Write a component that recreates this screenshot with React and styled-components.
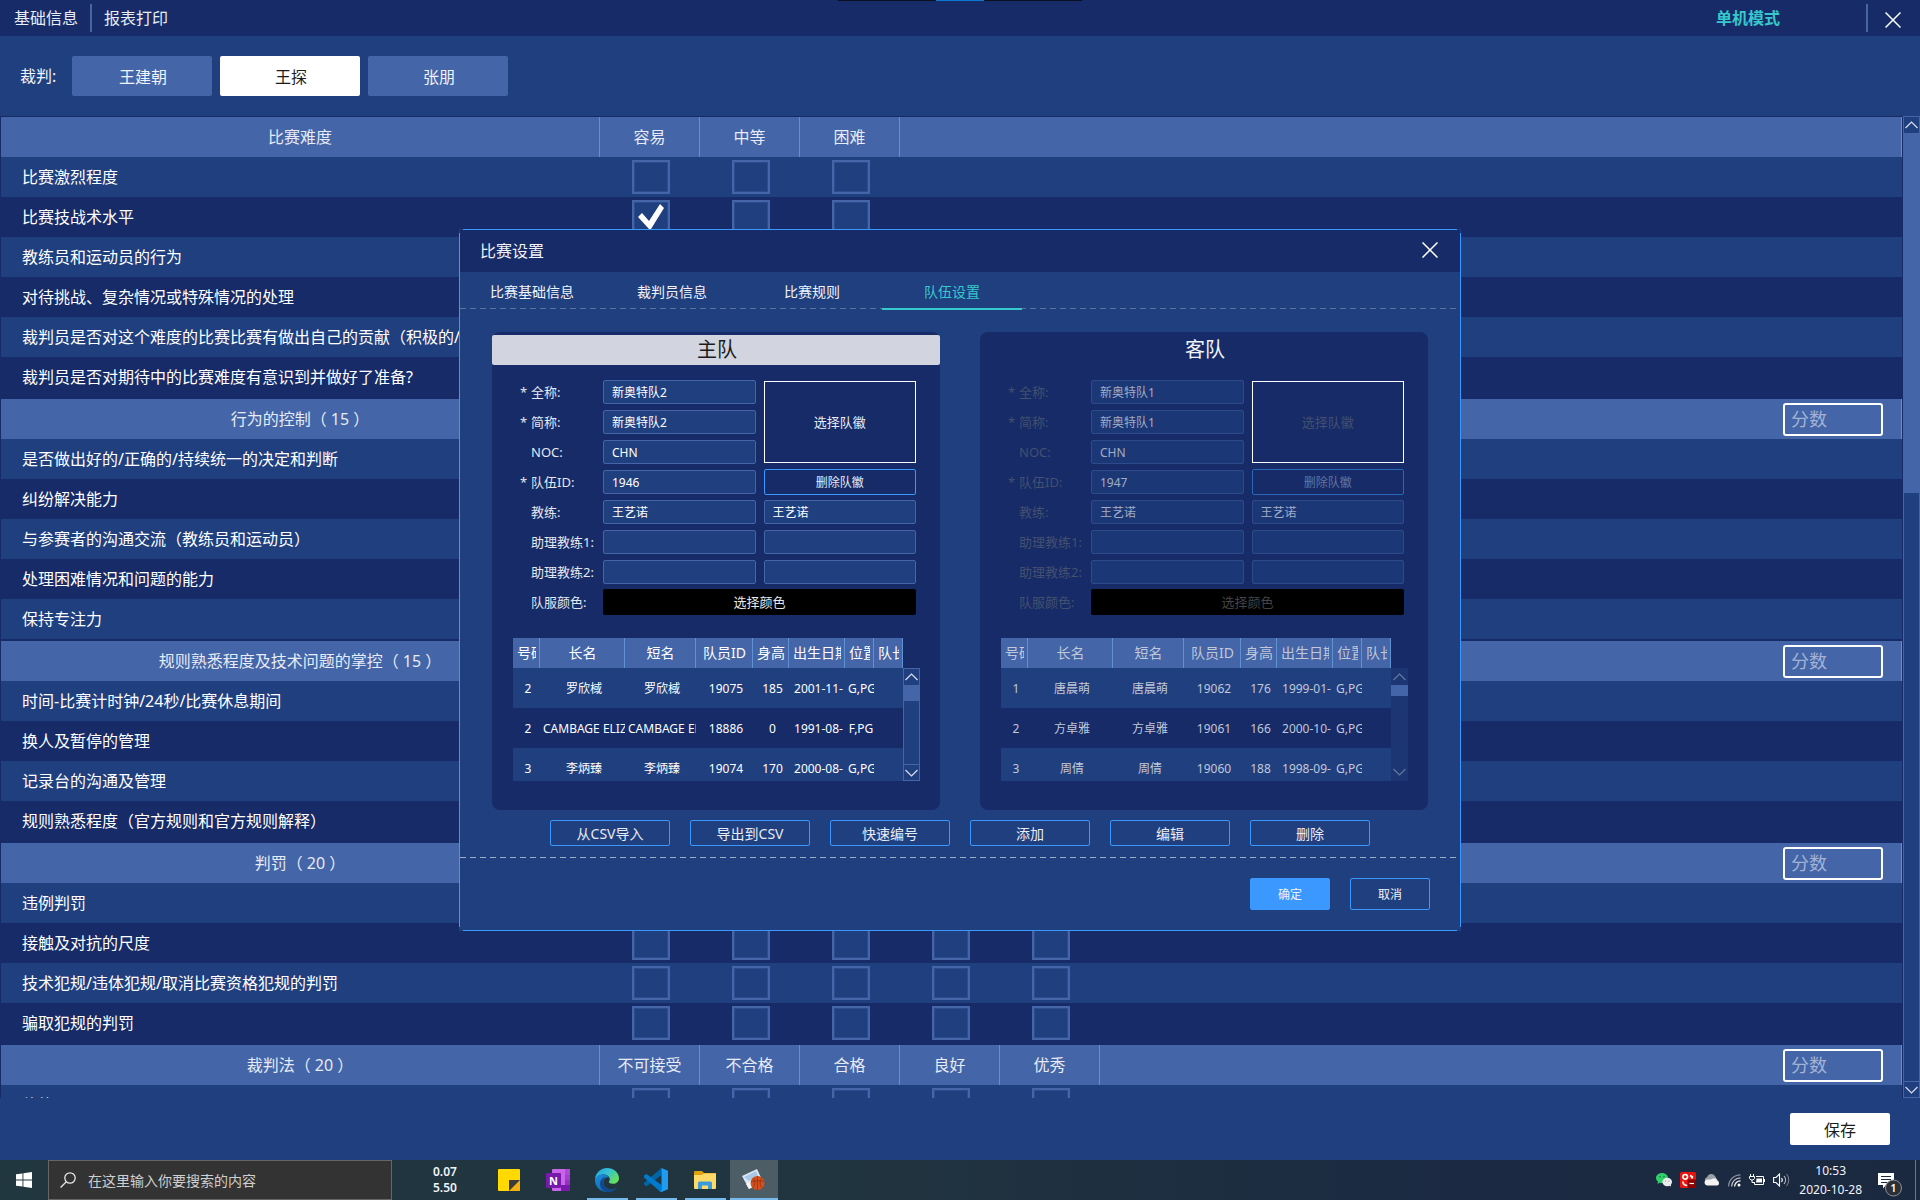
import React from "react";
import styled, { createGlobalStyle } from "styled-components";

const judges = ["王建朝", "王探", "张朋"];

const grades = ["不可接受", "不合格", "合格", "良好", "优秀"];

const sections = [
  {
    title: "比赛难度",
    grades: ["容易", "中等", "困难"],
    rows: [
      "比赛激烈程度",
      "比赛技战术水平",
      "教练员和运动员的行为",
      "对待挑战、复杂情况或特殊情况的处理",
      "裁判员是否对这个难度的比赛比赛有做出自己的贡献（积极的/消极的）",
      "裁判员是否对期待中的比赛难度有意识到并做好了准备?",
    ],
    checked: { row: 1, grade: 0 },
  },
  {
    title: "行为的控制（ 15 ）",
    grades,
    score: true,
    rows: [
      "是否做出好的/正确的/持续统一的决定和判断",
      "纠纷解决能力",
      "与参赛者的沟通交流（教练员和运动员）",
      "处理困难情况和问题的能力",
      "保持专注力",
    ],
  },
  {
    title: "规则熟悉程度及技术问题的掌控（ 15 ）",
    grades,
    score: true,
    rows: [
      "时间-比赛计时钟/24秒/比赛休息期间",
      "换人及暂停的管理",
      "记录台的沟通及管理",
      "规则熟悉程度（官方规则和官方规则解释）",
    ],
  },
  {
    title: "判罚（ 20 ）",
    grades,
    score: true,
    rows: [
      "违例判罚",
      "接触及对抗的尺度",
      "技术犯规/违体犯规/取消比赛资格犯规的判罚",
      "骗取犯规的判罚",
    ],
  },
  {
    title: "裁判法（ 20 ）",
    grades,
    score: true,
    rows: ["体能"],
  },
];

const tabs = ["比赛基础信息", "裁判员信息", "比赛规则", "队伍设置"];

const playerColumns = [
  { title: "号码", width: 27 },
  { title: "长名", width: 85 },
  { title: "短名", width: 71 },
  { title: "队员ID", width: 57 },
  { title: "身高", width: 36 },
  { title: "出生日期", width: 56 },
  { title: "位置", width: 29 },
  { title: "队长", width: 29 },
];

const teams = [
  {
    id: "home",
    title: "主队",
    name: "新奥特队2",
    noc: "CHN",
    code: "1946",
    coach: "王艺诺",
    players: [
      ["2", "罗欣棫", "罗欣棫", "19075", "185", "2001-11-", "G,PG", ""],
      ["2", "CAMBAGE ELIZABETH", "CAMBAGE ELIZABETH", "18886", "0", "1991-08-", "F,PG", ""],
      ["3", "李炳臻", "李炳臻", "19074", "170", "2000-08-", "G,PG", ""],
    ],
  },
  {
    id: "away",
    title: "客队",
    name: "新奥特队1",
    noc: "CHN",
    code: "1947",
    coach: "王艺诺",
    disabled: true,
    players: [
      ["1", "唐晨萌", "唐晨萌", "19062", "176", "1999-01-", "G,PG", ""],
      ["2", "方卓雅", "方卓雅", "19061", "166", "2000-10-", "G,PG", ""],
      ["3", "周倩", "周倩", "19060", "188", "1998-09-", "G,PG", ""],
    ],
  },
];

const actions = ["从CSV导入", "导出到CSV", "快速编号", "添加", "编辑", "删除"];

const CloseIcon = () => (
  <svg width="16" height="16" viewBox="0 0 16 16" stroke="#fff" strokeWidth="1.5">
    <path d="M0.5 0.5l15 15M15.5 0.5l-15 15" />
  </svg>
);

const Chevron = ({ down }) => (
  <svg width="13" height="8" viewBox="0 0 13 8" fill="none" stroke="currentColor" strokeWidth="1.2">
    <path d={down ? "M0.5 1l6 6 6-6" : "M0.5 7l6-6 6 6"} />
  </svg>
);

const ScrollBar = ({ thumb, disabled }) => (
  <Scroll $disabled={disabled}>
    <ScrollButton aria-label="向上滚动" disabled={disabled}>
      <Chevron />
    </ScrollButton>
    <ScrollTrack>
      <ScrollThumb style={{ height: `${thumb}%` }} />
    </ScrollTrack>
    <ScrollButton $down aria-label="向下滚动" disabled={disabled}>
      <Chevron down />
    </ScrollButton>
  </Scroll>
);

const Section = ({ section }) => (
  <SectionTable>
    <colgroup>
      <col width="599" />
      {section.grades.map((grade) => (
        <col key={grade} width="100" />
      ))}
      <col />
    </colgroup>
    <thead>
      <tr>
        <HeadCell>{section.title}</HeadCell>
        {section.grades.map((grade) => (
          <HeadCell key={grade}>{grade}</HeadCell>
        ))}
        <HeadCell>
          {section.score && <ScoreInput placeholder="分数" aria-label={section.title} />}
        </HeadCell>
      </tr>
    </thead>
    <tbody>
      {section.rows.map((row, r) => (
        <SectionRow key={row}>
          <RowLabel>{row}</RowLabel>
          {section.grades.map((grade, g) => (
            <CheckCell key={grade}>
              <CheckBox
                type="checkbox"
                aria-label={`${row} ${grade}`}
                defaultChecked={
                  section.checked?.row === r && section.checked?.grade === g
                }
              />
            </CheckCell>
          ))}
          <td />
        </SectionRow>
      ))}
    </tbody>
  </SectionTable>
);

const TeamPanel = ({ team }) => {
  const { id, disabled } = team;
  const field = (name, value, label) => (
    <TextInput
      id={`${id}-${name}`}
      aria-label={label}
      defaultValue={value}
      disabled={disabled}
    />
  );
  const caption = (name, text, required) => (
    <FieldLabel htmlFor={`${id}-${name}`} $disabled={disabled}>
      <Star>{required ? "*" : ""}</Star>
      {text}:
    </FieldLabel>
  );

  return (
    <Panel>
      <PanelTitle $active={!disabled}>{team.title}</PanelTitle>
      <Form>
        {caption("name", "全称", true)}
        {field("name", team.name)}
        <EmblemButton disabled={disabled}>选择队徽</EmblemButton>
        {caption("short", "简称", true)}
        {field("short", team.name)}
        {caption("noc", "NOC")}
        {field("noc", team.noc)}
        {caption("code", "队伍ID", true)}
        {field("code", team.code)}
        <OutlineButton $small disabled={disabled}>删除队徽</OutlineButton>
        {caption("coach", "教练")}
        {field("coach", team.coach)}
        {field("coach-short", team.coach, "教练短名")}
        {caption("assistant1", "助理教练1")}
        {field("assistant1", "")}
        {field("assistant1-short", "", "助理教练1短名")}
        {caption("assistant2", "助理教练2")}
        {field("assistant2", "")}
        {field("assistant2-short", "", "助理教练2短名")}
        {caption("color", "队服颜色")}
        <ColorButton id={`${id}-color`} disabled={disabled}>选择颜色</ColorButton>
      </Form>
      <Players>
        <PlayerViewport $disabled={disabled}>
          <PlayerTable>
            <colgroup>
              {playerColumns.map((column) => (
                <col key={column.title} width={column.width} />
              ))}
            </colgroup>
            <thead>
              <tr>
                {playerColumns.map((column) => (
                  <PlayerHead key={column.title}>
                    <Clip>{column.title}</Clip>
                  </PlayerHead>
                ))}
              </tr>
            </thead>
            <tbody>
              {team.players.map((player, i) => (
                <PlayerRow key={i}>
                  {player.map((value, j) => (
                    <PlayerCell key={j}>
                      <Clip>{value}</Clip>
                    </PlayerCell>
                  ))}
                </PlayerRow>
              ))}
            </tbody>
          </PlayerTable>
        </PlayerViewport>
        <PlayerScroll>
          <ScrollBar thumb={disabled ? 14 : 20} disabled={disabled} />
        </PlayerScroll>
      </Players>
    </Panel>
  );
};

const NotesIcon = () => (
  <svg width="22" height="22" viewBox="0 0 22 22">
    <rect width="22" height="22" rx="1" fill="#ffd900" />
    <path d="M11 22V11h11v10l-1 1z" fill="#f3b010" />
    <path d="M11 11h11L11 22z" fill="#3b3a39" />
  </svg>
);

const OneNoteIcon = () => (
  <svg width="24" height="22" viewBox="0 0 24 22">
    <rect x="6" width="18" height="22" rx="1" fill="#ca64ea" />
    <path d="M19 0h4a1 1 0 0 1 1 1v5h-5z" fill="#ae4bd5" />
    <path d="M19 6h5v5h-5z" fill="#a33fca" />
    <path d="M19 11h5v5h-5z" fill="#9332bf" />
    <path d="M15 16h9v5a1 1 0 0 1-1 1h-8z" fill="#7719aa" />
    <rect y="4" width="15" height="15" rx="1" fill="#7719aa" />
    <text x="7.5" y="15.5" fill="#fff" fontSize="11" fontWeight="700" textAnchor="middle">N</text>
  </svg>
);

const EdgeIcon = () => (
  <svg width="24" height="24" viewBox="0 0 24 24">
    <defs>
      <linearGradient id="edgeTop" x1="0" y1="0" x2="1" y2="0.6">
        <stop offset="0" stopColor="#1f9fe0" />
        <stop offset="0.5" stopColor="#35c1d6" />
        <stop offset="1" stopColor="#66e05a" />
      </linearGradient>
      <linearGradient id="edgeLow" x1="0" y1="0" x2="1" y2="1">
        <stop offset="0" stopColor="#1b8fe0" />
        <stop offset="1" stopColor="#0c59a4" />
      </linearGradient>
    </defs>
    <path d="M0 12C0 5 5.400 0 12 0s12 4.800 12 10.200c0 3.400-2.800 5.600-6.200 5.600-2.600 0-4-.9-4-1.700 0-.7 1-.9 1-2.800C14.800 8.600 12 6.500 8.600 6.500 4 6.500 1 9 0 12z" fill="url(#edgeTop)" />
    <path d="M0 12c1-3.500 4.200-5.800 8.600-5.500 2.400.2 4.500 1.300 5.500 2.900-3-.7-5.700 1.500-5.700 4.900 0 4.500 4.100 7.200 8 7.200 2.300 0 3.800-.6 5.700-1.800C20 22.500 16.200 24 12 24 5.200 24 0 18.600 0 12z" fill="url(#edgeLow)" />
    <path d="M8.400 14.300c0 4.500 4.100 7.200 8 7.200 2.300 0 3.800-.6 5.700-1.800-2.200 3-6 4.300-10.100 4.300-4-.6-7-4-7-8 0-3.700 2.600-6.400 5.700-7.400-1.500 1.300-2.300 3.200-2.300 5.700z" fill="#114a8b" />
  </svg>
);

const CodeIcon = () => (
  <svg width="24" height="24" viewBox="0 0 24 24">
    <path d="M17.500 0v7L2.500 18.500 0 16.500 0 15z" fill="#0065a9" />
    <path d="M17.500 24v-7L2.500 6 0 7.500v2L16 23.500z" fill="#007acc" />
    <path d="M17.500 0L24 2.800v18.400L17.500 24l-1.500-.8 1.500-1V2z" fill="#1f9cf0" />
  </svg>
);

const FolderIcon = () => (
  <svg width="22" height="18" viewBox="0 0 22 18">
    <path d="M0 1a1 1 0 0 1 1-1h7l2 2h11a1 1 0 0 1 1 1v14H0z" fill="#dfa20c" />
    <path d="M0 4h8l2-1.500h12V17a1 1 0 0 1-1 1H1a1 1 0 0 1-1-1z" fill="#ffd968" />
    <path d="M4 18v-6a1.500 1.500 0 0 1 1.500-1.500h11A1.500 1.500 0 0 1 18 12v6h-4v-3.500H8V18z" fill="#3a9bdc" />
  </svg>
);

const BasketballIcon = () => (
  <svg width="24" height="22" viewBox="0 0 24 22">
    <path d="M0 7L15 0l6 13L7 20z" fill="#dce8f4" />
    <path d="M2 8l12-6 2 5-9 5z" fill="#a9c8e6" />
    <path d="M7 20l-3-5 6-3 2 5z" fill="#f5f8fb" />
    <circle cx="15.500" cy="14" r="7" fill="#d4501e" />
    <path d="M9 12.500c5-1 9-1 13 0M15.500 7v14M11 9c2.500 3 2.500 7 0 10M20 9c-2.500 3-2.500 7 0 10" stroke="#7d2c10" strokeWidth="0.600" fill="none" />
  </svg>
);

const WeChatIcon = () => (
  <svg width="16" height="14" viewBox="0 0 16 14">
    <path d="M6 0C2.600 0 0 2.200 0 5c0 1.500.8 2.900 2 3.800L1.500 11l2.300-1.200c.7.200 1.400.3 2.200.3 3.400 0 6-2.300 6-5.100S9.400 0 6 0z" fill="#2fcf6a" />
    <ellipse cx="11.200" cy="9" rx="4.800" ry="4.200" fill="#ececec" />
    <path d="M13 12l2 1.800-.3-2.800z" fill="#ececec" />
    <circle cx="4" cy="3.700" r="0.700" fill="#14653a" />
    <circle cx="8" cy="3.700" r="0.700" fill="#14653a" />
    <circle cx="9.600" cy="8" r="0.600" fill="#888" />
    <circle cx="12.800" cy="8" r="0.600" fill="#888" />
  </svg>
);

const RedAppIcon = () => (
  <svg width="16" height="16" viewBox="0 0 16 16">
    <rect width="16" height="16" rx="1.500" fill="#e8150f" />
    <g fill="none" stroke="#fff" strokeWidth="1.600">
      <circle cx="5.200" cy="4.800" r="2.300" />
      <path d="M3 9.500c0 3 1.500 4 4.500 4M10 3.500l3 1.500M11 6l2-.5" />
    </g>
    <rect x="7.500" y="7.500" width="8.500" height="8.500" rx="1" fill="#8d0303" />
    <path d="M9.500 11.500h4.500" stroke="#fff" strokeWidth="1.200" />
  </svg>
);

const CloudIcon = () => (
  <svg width="16" height="12" viewBox="0 0 16 12">
    <path d="M3 9a3 3 0 0 1 0-5.800A4.500 4.500 0 0 1 11 2l3 5z" fill="#9c9fa6" />
    <path d="M3 11.500a3 3 0 0 1-.5-5.800C4.500 5 6 6 8 5c2-1.300 4.500-.5 5 1.500a2.600 2.600 0 0 1 .3 5z" fill="#f2f2f2" />
  </svg>
);

const WifiIcon = () => (
  <svg width="13" height="13" viewBox="0 0 13 13" fill="none" strokeWidth="1.200">
    <path d="M0.600 12.500C0.600 6 6 0.800 12.500 0.800" stroke="#8b909c" />
    <path d="M3.600 12.500c0-4.900 4-8.700 8.900-8.700" stroke="#c4c7ce" />
    <path d="M6.600 12.500c0-3.200 2.700-5.700 5.900-5.700" stroke="#fff" />
    <circle cx="11" cy="11" r="1.500" fill="#fff" />
  </svg>
);

const BatteryIcon = () => (
  <svg width="16" height="12" viewBox="0 0 16 12">
    <path d="M7 2.500h7.500v8H5.500V8M15.500 5v3" fill="none" stroke="#fff" />
    <path d="M7.500 4.500H13v4H7z" fill="#fff" />
    <path d="M1.500 0v2M4.500 0v2M0.500 2.500h5v2L4 6H2L0.500 4.500zM3 6v2.500h2.500" fill="none" stroke="#fff" />
  </svg>
);

const SpeakerIcon = () => (
  <svg width="17" height="14" viewBox="0 0 17 14" fill="none" strokeWidth="1.100">
    <path d="M0.600 4.500h2.400L6.500 1v12L3 9.500H.6z" stroke="#fff" />
    <path d="M8.500 5c1 1.200 1 2.800 0 4" stroke="#fff" />
    <path d="M11 3c2 2.300 2 5.700 0 8" stroke="#c4c7ce" />
    <path d="M13.500 1c3 3.500 3 8.500 0 12" stroke="#777d8b" />
  </svg>
);

const NoticeIcon = () => (
  <svg width="26" height="26" viewBox="0 0 26 26">
    <path d="M1 2h16v12H9l-3 3.500V14H1z" fill="#fff" />
    <path d="M4 5.500h10M4 8.500h10M4 11.500h6" stroke="#1c2940" />
    <circle cx="16.500" cy="17" r="8" fill="#2b2f36" stroke="#8d9096" />
    <text x="16.500" y="21" fill="#fff" fontSize="11" fontWeight="600" textAnchor="middle">1</text>
  </svg>
);

const App = () => {
  return (
    <>
      <GlobalStyle />
      <Desktop>
        <Window>
          <CaptureBar>
            <CaptureMark />
          </CaptureBar>
          <TopBar>
            <MenuLink href="#info">基础信息</MenuLink>
            <Divider />
            <MenuLink href="#report">报表打印</MenuLink>
            <Mode>单机模式</Mode>
            <Divider />
            <CloseButton aria-label="关闭">
              <CloseIcon />
            </CloseButton>
          </TopBar>
          <JudgeBar>
            <JudgeLabel>裁判:</JudgeLabel>
            {judges.map((judge, index) => (
              <JudgeButton key={judge} $active={index === 1}>
                {judge}
              </JudgeButton>
            ))}
          </JudgeBar>
          <ScoreArea>
            <ScoreList>
              {sections.map((section) => (
                <Section key={section.title} section={section} />
              ))}
            </ScoreList>
            <ScrollBar thumb={38} />
          </ScoreArea>
          <SaveBar>
            <SaveButton>保存</SaveButton>
          </SaveBar>
          <Overlay>
            <Modal role="dialog" aria-label="比赛设置">
              <ModalHeader>
                <span>比赛设置</span>
                <ModalClose aria-label="关闭">
                  <CloseIcon />
                </ModalClose>
              </ModalHeader>
              <TabBar>
                {tabs.map((tab, index) => (
                  <Tab key={tab} $active={index === 3}>
                    {tab}
                  </Tab>
                ))}
              </TabBar>
              <Teams>
                {teams.map((team) => (
                  <TeamPanel key={team.id} team={team} />
                ))}
              </Teams>
              <Actions>
                {actions.map((action) => (
                  <OutlineButton key={action}>{action}</OutlineButton>
                ))}
              </Actions>
              <DashedLine />
              <ModalFooter>
                <FooterButton $primary>确定</FooterButton>
                <FooterButton>取消</FooterButton>
              </ModalFooter>
            </Modal>
          </Overlay>
        </Window>
        <TaskBar>
          <StartButton aria-label="开始">
            <svg width="16" height="16" viewBox="0 0 16 16" fill="#fff">
              <path d="M0 2.300l6.500-.9v6.200H0zM7.400 1.300L16 0v7.600H7.400zM0 8.400h6.500v6.200L0 13.700zM7.400 8.400H16V16l-8.600-1.300z" />
            </svg>
          </StartButton>
          <SearchBox>
            <svg width="16" height="16" viewBox="0 0 16 16" fill="none" stroke="#e6e6e6" strokeWidth="1.300">
              <circle cx="10" cy="6" r="5.200" />
              <path d="M6.300 9.800L0.600 15.500" />
            </svg>
            <SearchInput placeholder="在这里输入你要搜索的内容" aria-label="搜索" />
          </SearchBox>
          <NetSpeed>
            <span>0.07</span>
            <span>5.50</span>
          </NetSpeed>
          <TaskButton aria-label="便笺"><NotesIcon /></TaskButton>
          <TaskButton aria-label="OneNote"><OneNoteIcon /></TaskButton>
          <TaskButton aria-label="Edge" $open><EdgeIcon /></TaskButton>
          <TaskButton aria-label="VS Code" $open><CodeIcon /></TaskButton>
          <TaskButton aria-label="文件资源管理器" $open><FolderIcon /></TaskButton>
          <TaskButton aria-label="比赛管理" $open $focused><BasketballIcon /></TaskButton>
          <Tray>
            <WeChatIcon />
            <RedAppIcon />
            <CloudIcon />
            <WifiIcon />
            <BatteryIcon />
            <SpeakerIcon />
          </Tray>
          <Clock>
            <span>10:53</span>
            <span>2020-10-28</span>
          </Clock>
          <NoticeButton aria-label="通知"><NoticeIcon /></NoticeButton>
        </TaskBar>
      </Desktop>
    </>
  );
};

const GlobalStyle = createGlobalStyle`
  * {
    box-sizing: border-box;
  }

  body {
    margin: 0;
    background: #203f7f;
  }

  body, button, input {
    font-family: "Noto Sans", "Noto Sans CJK SC", sans-serif;
  }

  button {
    padding: 0;
    border: none;
    background: transparent;
    color: inherit;
  }
`;

const Desktop = styled.div`
  height: 100vh;
  display: flex;
  flex-direction: column;
  color: #f0f3f9;
  font-size: 16px;
  line-height: 20px;
`;

const Window = styled.main`
  position: relative;
  flex: 1;
  min-height: 0;
  display: flex;
  flex-direction: column;
  background: #203f7f;
`;

const CaptureBar = styled.div`
  position: absolute;
  top: 0;
  left: 50%;
  transform: translateX(-50%);
  width: 244px;
  height: 1px;
  background: #0b1020;
`;

const CaptureMark = styled.div`
  width: 48px;
  height: 1px;
  margin: 0 auto;
  background: #0a78d0;
`;

const TopBar = styled.header`
  height: 36px;
  display: flex;
  align-items: center;
  padding-left: 14px;
  background: #162b67;
`;

const MenuLink = styled.a`
  color: #e8ecf5;
  text-decoration: none;
`;

const Divider = styled.div`
  width: 2px;
  height: 28px;
  margin: 0 12px;
  background: #4465a7;
`;

const Mode = styled.span`
  margin-left: auto;
  margin-right: 74px;
  color: #37c8cc;
  font-weight: 700;
`;

const CloseButton = styled.button`
  width: 26px;
  height: 36px;
  margin-right: 14px;
  display: flex;
  align-items: center;
  justify-content: center;
  padding-top: 4px;
`;

const JudgeBar = styled.div`
  height: 80px;
  display: flex;
  align-items: center;
  gap: 8px;
  padding-left: 20px;
`;

const JudgeLabel = styled.span`
  width: 44px;
`;

const JudgeButton = styled.button`
  width: 140px;
  height: 40px;
  padding-left: 2px;
  border-radius: 2px;
  font-size: 16px;
  background: ${({ $active }) => ($active ? "#fff" : "#4465a7")};
  color: ${({ $active }) => ($active ? "#1c1c1c" : "#f0f3f9")};
`;

const ScoreArea = styled.div`
  flex: 1;
  min-height: 0;
  display: flex;
`;

const ScoreList = styled.div`
  flex: 1;
  min-width: 0;
  overflow: hidden;
`;

const SectionTable = styled.table`
  width: 100%;
  table-layout: fixed;
  border-spacing: 0;
  border: 1px solid #162b67;
`;

const HeadCell = styled.th`
  height: 40px;
  padding: 0;
  border-right: 1px solid #5e93d3;
  background: #4465a7;
  color: #e6ebf5;
  font-weight: 400;
  text-align: center;

  &:last-child {
    padding-right: 18px;
    text-align: right;
  }
`;

const ScoreInput = styled.input`
  display: block;
  width: 100px;
  height: 33px;
  margin-left: auto;
  padding: 0 6px;
  border: 2px solid #fff;
  border-radius: 3px;
  background: transparent;
  color: #fff;
  font-size: 18px;

  &::placeholder {
    color: #a3b3d5;
  }
`;

const SectionRow = styled.tr`
  background: #203f7f;

  &:nth-child(even) {
    background: #162b67;
  }
`;

const RowLabel = styled.td`
  height: 40px;
  padding: 0 0 0 21px;
  color: #fff;
  white-space: nowrap;
  overflow: hidden;
`;

const CheckCell = styled.td`
  padding: 0;
  text-align: center;
`;

const CheckBox = styled.input`
  appearance: none;
  display: block;
  width: 38px;
  height: 34px;
  margin: 0 auto 0 32px;
  border: 2px solid #4465a7;
  background: #203f7f;
  box-shadow: inset 0 0 0 1px #2c4c8e;

  &:checked::before {
    content: "";
    display: block;
    width: 34px;
    height: 30px;
    background: #fff;
    clip-path: polygon(4px 15px, 8px 11px, 15px 19px, 26px 2px, 30px 6px, 17px 27px, 15px 27px);
  }
`;

const Scroll = styled.div`
  width: 17px;
  height: 100%;
  display: flex;
  flex-direction: column;
  border: 1px solid ${({ $disabled }) => ($disabled ? "#1c3674" : "#4465a7")};
  background: ${({ $disabled }) => ($disabled ? "#1c3674" : "#203f7f")};
  color: ${({ $disabled }) => ($disabled ? "#66789f" : "#d8deec")};
`;

const ScrollButton = styled.button`
  height: 16px;
  display: flex;
  align-items: center;
  justify-content: center;
  border-top: ${({ $down, disabled }) =>
    $down && !disabled ? "1px solid #4465a7" : "none"};
`;

const ScrollTrack = styled.div`
  flex: 1;
`;

const ScrollThumb = styled.div`
  margin: 0 -1px;
  background: #4465a7;
`;

const SaveBar = styled.div`
  height: 62px;
  display: flex;
  align-items: center;
  justify-content: flex-end;
  padding-right: 30px;
`;

const SaveButton = styled.button`
  width: 100px;
  height: 32px;
  border-radius: 2px;
  background: #fff;
  color: #1c1c1c;
  font-size: 16px;
`;

const Overlay = styled.div`
  position: absolute;
  inset: 0;
  display: flex;
  align-items: center;
  justify-content: center;
`;

/* the frame lines stop short of the corners */
const Modal = styled.section`
  width: 1002px;
  max-width: 100%;
  padding: 1px;
  background: linear-gradient(#3a98ff, #3a98ff) top / calc(100% - 8px) 1px no-repeat,
    linear-gradient(#3a98ff, #3a98ff) bottom / calc(100% - 8px) 1px no-repeat,
    linear-gradient(#3a98ff, #3a98ff) left / 1px calc(100% - 8px) no-repeat,
    linear-gradient(#3a98ff, #3a98ff) right / 1px calc(100% - 8px) no-repeat,
    #203f7f;
`;

const ModalHeader = styled.div`
  height: 42px;
  display: flex;
  align-items: center;
  justify-content: space-between;
  padding: 0 22px 0 20px;
  background: #162b67;
`;

const ModalClose = styled.button`
  height: 18px;
  padding-bottom: 2px;
  line-height: 0;
`;

const dashes = (color) =>
  `repeating-linear-gradient(90deg, ${color} 0 6px, transparent 6px 10px)`;

const TabBar = styled.nav`
  height: 38px;
  display: flex;
  padding-left: 2px;
  background: ${dashes("#5a749f")} 0 36px / 100% 1px no-repeat;
`;

const Tab = styled.button`
  width: 140px;
  height: 38px;
  padding-top: 2px;
  border-bottom: 2px solid ${({ $active }) => ($active ? "#37c8cc" : "transparent")};
  color: ${({ $active }) => ($active ? "#37c8cc" : "#f0f3f9")};
  font-size: 14px;
`;

const Teams = styled.div`
  display: flex;
  gap: 40px;
  padding: 22px 32px 0;
`;

const Panel = styled.article`
  flex: 1;
  min-width: 0;
  padding: 3px 0 29px;
  border-radius: 8px;
  background: #162b67;
`;

const PanelTitle = styled.h2`
  margin: 0;
  padding-left: 2px;
  border-radius: 2px;
  font-size: 20px;
  font-weight: 400;
  line-height: 30px;
  text-align: center;
  background: ${({ $active }) => ($active ? "#d2d5e0" : "transparent")};
  color: ${({ $active }) => ($active ? "#1c1c1c" : "#f0f3f9")};
`;

const Form = styled.form`
  display: grid;
  grid-template-columns: 75px 1fr 1fr;
  grid-auto-rows: 30px;
  column-gap: 8px;
  align-items: center;
  padding: 12px 24px 0 28px;
`;

const FieldLabel = styled.label`
  grid-column: 1;
  display: flex;
  font-size: 13px;
  white-space: nowrap;
  color: ${({ $disabled }) => ($disabled ? "#44506f" : "#e3e8f2")};
`;

const Star = styled.span`
  width: 11px;
  flex-shrink: 0;
`;

const TextInput = styled.input`
  width: 100%;
  min-width: 0;
  height: 24px;
  padding: 0 8px;
  border: 1px solid #4465a7;
  border-radius: 2px;
  background: #203f7f;
  color: #fff;
  font-size: 12px;

  &:disabled {
    border-color: #2d4a8a;
    background: #1c3775;
    color: #a3adc6;
  }
`;

const EmblemButton = styled.button`
  grid-column: 3;
  grid-row: 1 / 4;
  height: 82px;
  padding-bottom: 2px;
  border: 1px solid #fff;
  color: #e8ecf5;
  font-size: 13px;

  &:disabled {
    color: #44506f;
  }
`;

const OutlineButton = styled.button`
  width: ${({ $small }) => ($small ? "100%" : "120px")};
  height: 26px;
  border: 1px solid #3a98ff;
  border-radius: 2px;
  color: #e8ecf5;
  font-size: ${({ $small }) => ($small ? "12px" : "14px")};

  &:disabled {
    border-color: #2968b8;
    color: #6474a0;
  }
`;

const ColorButton = styled.button`
  grid-column: 2 / 4;
  height: 26px;
  padding-bottom: 2px;
  border-radius: 2px;
  background: #000;
  color: #e8e8e8;
  font-size: 13px;

  &:disabled {
    color: #444;
  }
`;

const Players = styled.div`
  display: flex;
  padding: 21px 20px 0 21px;
`;

const PlayerViewport = styled.div`
  width: 390px;
  height: 143px;
  overflow: hidden;
  color: ${({ $disabled }) => ($disabled ? "#c0c8da" : "#fff")};
`;

const PlayerTable = styled.table`
  width: 100%;
  table-layout: fixed;
  border-spacing: 0;
`;

const PlayerHead = styled.th`
  height: 30px;
  padding: 0 3px 0 4px;
  border-right: 1px solid #5e93d3;
  background: #4465a7;
  font-size: 14px;
  font-weight: 400;
`;

const PlayerRow = styled.tr`
  background: #203f7f;

  &:nth-child(even) {
    background: #162b67;
  }
`;

const PlayerCell = styled.td`
  height: 40px;
  padding: 2px 0 0 3px;
  font-size: 12px;
  text-align: center;
`;

const Clip = styled.div`
  overflow: hidden;
  white-space: nowrap;
`;

const PlayerScroll = styled.div`
  height: 113px;
  margin-top: 30px;
`;

const Actions = styled.div`
  display: flex;
  justify-content: center;
  gap: 20px;
  padding: 10px 0;
`;

const DashedLine = styled.div`
  height: 1px;
  margin-top: 1px;
  background: ${dashes("#a0adc8")};
`;

const ModalFooter = styled.footer`
  display: flex;
  justify-content: flex-end;
  gap: 20px;
  padding: 20px 30px;
`;

const FooterButton = styled.button`
  width: 80px;
  height: 32px;
  border: 1px solid #3a98ff;
  border-radius: 2px;
  background: ${({ $primary }) => ($primary ? "#3a98ff" : "transparent")};
  font-size: 12px;
`;

const TaskBar = styled.footer`
  height: 40px;
  display: flex;
  align-items: center;
  background: linear-gradient(90deg, #21373f, #20343f 45%, #1b2a42 75%, #1b2940);
`;

const StartButton = styled.button`
  width: 48px;
  height: 40px;
  line-height: 0;
`;

const SearchBox = styled.label`
  width: 344px;
  height: 40px;
  display: flex;
  align-items: center;
  gap: 12px;
  padding: 0 11px;
  border: 1px solid #666;
  background: #333;
`;

const SearchInput = styled.input`
  flex: 1;
  padding: 0;
  border: none;
  background: transparent;
  color: #fff;
  font-size: 14px;

  &::placeholder {
    color: #cfcfcf;
  }
`;

const NetSpeed = styled.div`
  display: flex;
  flex-direction: column;
  margin: 0 32px 0 41px;
  font-size: 12px;
  font-weight: 600;
  line-height: 16px;
`;

const TaskButton = styled.button`
  width: ${({ $focused }) => ($focused ? "48px" : "41px")};
  height: 40px;
  margin-right: ${({ $focused }) => ($focused ? "0" : "8px")};
  margin-left: ${({ $focused }) => ($focused ? "-4px" : "0")};
  display: flex;
  align-items: center;
  justify-content: center;
  border-top: 2px solid transparent;
  border-bottom: 2px solid ${({ $open }) => ($open ? "#76b9ed" : "transparent")};
  background: ${({ $focused }) => ($focused ? "#4d5d65" : "transparent")};
`;

const Tray = styled.div`
  display: flex;
  align-items: center;
  gap: 8px;
  margin-left: auto;
`;

const Clock = styled.div`
  display: flex;
  flex-direction: column;
  align-items: center;
  margin: 0 15px 0 9px;
  font-size: 12px;
  line-height: 19px;
`;

const NoticeButton = styled.button`
  height: 40px;
  padding: 8px 12px 0 0;
  margin-right: 4px;
  border-right: 1px solid #6d7686;
  line-height: 0;
`;

export default App;
